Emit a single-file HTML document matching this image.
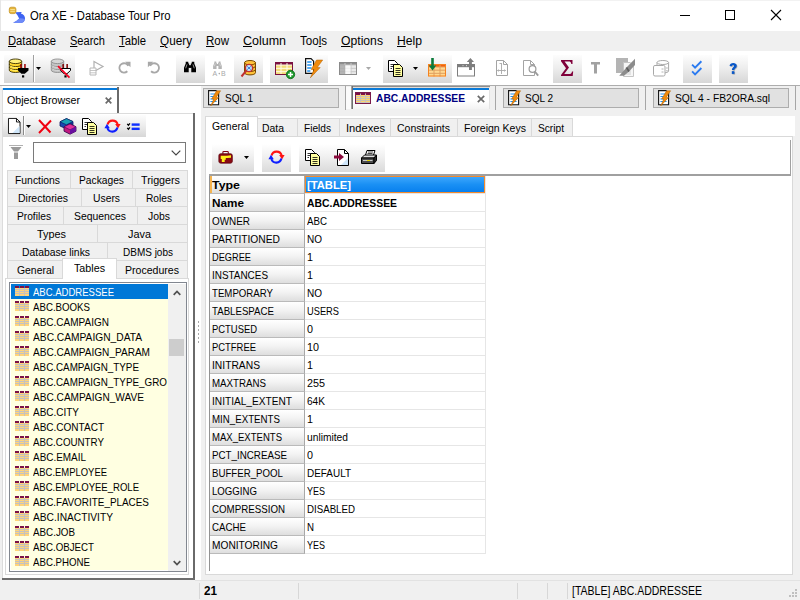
<!DOCTYPE html>
<html><head><meta charset="utf-8"><title>Ora XE - Database Tour Pro</title>
<style>
html,body{margin:0;padding:0;background:#f0f0f0;}
body{width:800px;height:600px;overflow:hidden;font-family:"Liberation Sans",sans-serif;font-size:11px;color:#000;}
#w{position:relative;width:800px;height:600px;overflow:hidden;background:#f0f0f0;}
#w div,#w svg{position:absolute;box-sizing:border-box;}
#w svg{overflow:visible;}
.t{position:absolute;white-space:nowrap;transform-origin:0 50%;display:block;}
u{text-decoration:underline;text-underline-offset:0.7px;text-decoration-thickness:1px;}
.tb{background:linear-gradient(#fdfdfd,#ececec 50%,#d7d7d7);}
.tab{background:#f0f0f0;border:1px solid #d9d9d9;}
.hdr{background:linear-gradient(#ffffff,#f4f4f4 45%,#dedede);border-right:1px solid #a8a8a8;border-bottom:1px solid #bababa;}
</style></head><body><div id="w">
<div style="left:0px;top:0px;width:800px;height:31px;background:#ffffff;"></div><div style="left:0px;top:0px;width:800px;height:1px;background:#f2f2f2;"></div><svg style="left:0px;top:0px" width="32" height="31" viewBox="0 0 32 31"><path d="M15 12.2 L21.8 11.9 L20.8 13.4 Q25.2 14.8 25 18.5 Q24.8 22 22 22.8 H13.1 Q16.5 21.2 19.2 18.4 Q17.8 15 15 12.2 Z" fill="#3d63f2"/><path d="M19.2 18.4 Q21.5 18 24.9 19 Q24.6 22 22 22.8 H13.1 Q16.5 21.2 19.2 18.4 Z" fill="#6d8af8"/><rect x="9.3" y="7.2" width="6.6" height="6.4" rx="1.8" fill="#e6b436" stroke="#c8982a" stroke-width="0.8"/><path d="M10.3 9.6 H14.9 M10.3 11.3 H14.9" stroke="#fbe9a0" stroke-width="0.9"/></svg><div style="left:0px;top:0px;width:1px;height:31px;background:#e6e6e6;"></div><span class="t" style="left:30.4px;top:8px;height:16px;line-height:16px;font-size:12px;transform:scaleX(0.9369);">Ora XE - Database Tour Pro</span><svg style="left:680px;top:15px" width="10" height="1"><rect width="10" height="1" fill="#000"/></svg><svg style="left:725px;top:10px" width="10" height="10"><rect x="0.5" y="0.5" width="9" height="9" fill="none" stroke="#000" stroke-width="1"/></svg><svg style="left:771px;top:10px" width="10" height="10"><path d="M0 0 L10 10 M10 0 L0 10" stroke="#000" stroke-width="1.1"/></svg><span class="t" style="left:8px;top:33px;height:16px;line-height:16px;font-size:12px;transform:scaleX(0.9343);"><u>D</u>atabase</span><span class="t" style="left:70px;top:33px;height:16px;line-height:16px;font-size:12px;transform:scaleX(0.9199);"><u>S</u>earch</span><span class="t" style="left:119px;top:33px;height:16px;line-height:16px;font-size:12px;transform:scaleX(0.9412);"><u>T</u>able</span><span class="t" style="left:160px;top:33px;height:16px;line-height:16px;font-size:12px;transform:scaleX(0.9790);"><u>Q</u>uery</span><span class="t" style="left:206px;top:33px;height:16px;line-height:16px;font-size:12px;transform:scaleX(0.9577);"><u>R</u>ow</span><span class="t" style="left:243px;top:33px;height:16px;line-height:16px;font-size:12px;transform:scaleX(1.0397);"><u>C</u>olumn</span><span class="t" style="left:300px;top:33px;height:16px;line-height:16px;font-size:12px;transform:scaleX(0.9632);">Too<u>l</u>s</span><span class="t" style="left:341px;top:33px;height:16px;line-height:16px;font-size:12px;transform:scaleX(1.0151);"><u>O</u>ptions</span><span class="t" style="left:397px;top:33px;height:16px;line-height:16px;font-size:12px;transform:scaleX(1.0127);"><u>H</u>elp</span><div style="left:0px;top:51px;width:800px;height:34px;background:#ffffff;"></div><div style="left:0px;top:85px;width:800px;height:1px;background:#adadad;"></div><div class="tb" style="left:4px;top:54.5px;width:71px;height:28px"></div><div class="tb" style="left:176px;top:54.5px;width:28.5px;height:28px"></div><div class="tb" style="left:234px;top:54.5px;width:28.5px;height:28px"></div><div class="tb" style="left:270px;top:54.5px;width:57.5px;height:28px"></div><div class="tb" style="left:383px;top:54.5px;width:69px;height:28px"></div><div class="tb" style="left:553px;top:54.5px;width:29px;height:28px"></div><div class="tb" style="left:683px;top:54.5px;width:29px;height:28px"></div><div class="tb" style="left:719px;top:54.5px;width:29px;height:28px"></div><div style="left:33px;top:55px;width:1px;height:27px;background:#a0a0a0;"></div><div style="left:34px;top:55px;width:1px;height:27px;background:#ffffff;"></div><svg style="left:0px;top:52px" width="80" height="32" viewBox="0 0 80 32"><path d="M9.3 9.3 V18.2 A6.2 2.3 0 0 0 21.700000000000003 18.2 V9.3 Z" fill="#ffd92e" stroke="#3a3000" stroke-width="0.9"/><path d="M9.3 12.3 A6.2 2.3 0 0 0 21.700000000000003 12.3" fill="none" stroke="#3a3000" stroke-width="0.9"/><path d="M10.100000000000001 13.5 A6.2 2.3 0 0 0 17.3 15.5" fill="none" stroke="#fff27a" stroke-width="0.9"/><path d="M9.3 15.3 A6.2 2.3 0 0 0 21.700000000000003 15.3" fill="none" stroke="#3a3000" stroke-width="0.9"/><path d="M10.100000000000001 16.5 A6.2 2.3 0 0 0 17.3 18.5" fill="none" stroke="#fff27a" stroke-width="0.9"/><ellipse cx="15.5" cy="9.3" rx="6.2" ry="2.3" fill="#fff27a" stroke="#3a3000" stroke-width="0.9"/><rect x="20.2" y="12" width="1.5" height="4.2" fill="#a00000"/><rect x="24.2" y="12" width="1.5" height="4.2" fill="#a00000"/><path d="M18 16 H28.5 V18.5 L24.8 21.7 H21.4 L18 18.5 Z" fill="#000"/><rect x="22" y="23.3" width="2.2" height="2.2" fill="#000"/><path d="M51.3 9.3 V18.2 A6.2 2.3 0 0 0 63.699999999999996 18.2 V9.3 Z" fill="#c4c4c4" stroke="#8e8e8e" stroke-width="0.9"/><path d="M51.3 12.3 A6.2 2.3 0 0 0 63.699999999999996 12.3" fill="none" stroke="#8e8e8e" stroke-width="0.9"/><path d="M52.099999999999994 13.5 A6.2 2.3 0 0 0 59.3 15.5" fill="none" stroke="#d6d6d6" stroke-width="0.9"/><path d="M51.3 15.3 A6.2 2.3 0 0 0 63.699999999999996 15.3" fill="none" stroke="#8e8e8e" stroke-width="0.9"/><path d="M52.099999999999994 16.5 A6.2 2.3 0 0 0 59.3 18.5" fill="none" stroke="#d6d6d6" stroke-width="0.9"/><ellipse cx="57.5" cy="9.3" rx="6.2" ry="2.3" fill="#d6d6d6" stroke="#8e8e8e" stroke-width="0.9"/><rect x="62.4" y="12" width="1.5" height="4.2" fill="#800000"/><rect x="66.4" y="12" width="1.5" height="4.2" fill="#800000"/><path d="M60.5 16.5 H70.5 V18.5 L67 21.7 H64 L60.5 18.5 Z" fill="#fff" stroke="#000" stroke-width="1"/><rect x="64.4" y="23.3" width="2.2" height="2.2" fill="#000"/><path d="M58 14.2 L69.5 25.6" stroke="#f40020" stroke-width="1.7"/></svg><svg style="left:36px;top:67px" width="5" height="3"><path d="M0 0 H5 L2.5 3 Z" fill="#000"/></svg><svg style="left:88px;top:60px" width="16" height="16" viewBox="0 0 16 16"><path d="M6 1.5 L15 6.5 L6 11.5 Z" fill="#fff" stroke="#b0b0b0" stroke-width="1.2"/><path d="M2 8 H8 V15 H2 Z" fill="#fff" stroke="#b8b8b8" stroke-width="1"/><path d="M2 10.5 H8 M2 12.8 H8" stroke="#b8b8b8" stroke-width="0.8"/></svg><svg style="left:117px;top:60px" width="14.4" height="14.4" viewBox="0 0 16 16"><path d="M12.5 6.5 A5.2 5.2 0 1 0 11.5 12.5" fill="none" stroke="#a8a8a8" stroke-width="2"/><path d="M9 2 H15 V8 Z" fill="#a8a8a8"/></svg><svg style="left:146.5px;top:60px" width="14.4" height="14.4" viewBox="0 0 16 16"><path d="M3.5 6.5 A5.2 5.2 0 1 1 4.5 12.5" fill="none" stroke="#a8a8a8" stroke-width="2"/><path d="M7 2 H1 V8 Z" fill="#a8a8a8"/></svg><svg style="left:183px;top:61px" width="14" height="12" viewBox="0 0 16 14"><path d="M3 1 H6 V3 H7 V5 H9 V3 H10 V1 H13 V3 L15 8 V13 H9.5 V8 H6.5 V13 H1 V8 L3 3 Z" fill="#000"/><rect x="7" y="5.5" width="2" height="2.5" fill="#000"/><path d="M4.5 4 L3 8.5 M11.5 4 L13 8.5" stroke="#fff" stroke-width="0.9" opacity="0.75"/></svg><svg style="left:211px;top:59px" width="18" height="19" viewBox="0 0 18 19"><g transform="translate(1.5,2) scale(0.62)"><path d="M3 1 H6 V3 H7 V5 H9 V3 H10 V1 H13 V3 L15 8 V13 H9.5 V8 H6.5 V13 H1 V8 L3 3 Z" fill="#b4b4b4"/><rect x="7" y="5.5" width="2" height="2.5" fill="#b4b4b4"/><path d="M4.5 4 L3 8.5 M11.5 4 L13 8.5" stroke="#fff" stroke-width="0.9" opacity="0.75"/></g><text x="1.5" y="17" font-family="Liberation Sans" font-size="7" fill="#a8a8a8">A</text><circle cx="8.3" cy="14.6" r="0.8" fill="#a8a8a8"/><text x="10" y="17" font-family="Liberation Sans" font-size="7" fill="#a8a8a8">B</text></svg><svg style="left:240px;top:59px" width="18" height="18" viewBox="0 0 18 18"><path d="M4.5 3.7 V13.7 A5.5 2.2 0 0 0 15.5 13.7 V3.7 Z" fill="#ffc23a" stroke="#7a4a00" stroke-width="1"/><path d="M4.5 7.033333333333333 A5.5 2.2 0 0 0 15.5 7.033333333333333" fill="none" stroke="#7a4a00" stroke-width="1"/><path d="M4.5 10.366666666666667 A5.5 2.2 0 0 0 15.5 10.366666666666667" fill="none" stroke="#7a4a00" stroke-width="1"/><ellipse cx="10" cy="3.7" rx="5.5" ry="2.2" fill="#ffc23a" stroke="#7a4a00" stroke-width="1"/><circle cx="9" cy="9" r="3.6" fill="#bfe6ff" stroke="#c03030" stroke-width="1.4"/><path d="M6.3 11.7 L1.5 17.5" stroke="#c03030" stroke-width="2"/><path d="M7.2 7.4 L10.8 10.6 M10.8 7.4 L7.2 10.6" stroke="#3070d0" stroke-width="0.9"/></svg><svg style="left:275px;top:61px" width="21" height="19" viewBox="0 0 21 19"><rect x="0" y="1" width="18" height="13" fill="#f3dc7a"/><rect x="0" y="1" width="18" height="3" fill="#7a1040"/><rect x="0" y="3.5" width="18" height="1" fill="#fffbe8"/><rect x="0" y="6.833333333333334" width="18" height="1" fill="#fffbe8"/><rect x="0" y="10.166666666666668" width="18" height="1" fill="#fffbe8"/><rect x="5.5" y="1" width="1" height="13" fill="#fffbe8"/><rect x="11.5" y="1" width="1" height="13" fill="#fffbe8"/><rect x="0.5" y="1.5" width="17" height="12" fill="none" stroke="#7a1040" stroke-width="1"/><circle cx="15.5" cy="13.5" r="4.2" fill="#1e9a2e" stroke="#0b6a18" stroke-width="0.8"/><path d="M13 13.5 H18 M15.5 11 V16" stroke="#fff" stroke-width="1.5"/></svg><svg style="left:305px;top:58px" width="18" height="20" viewBox="0 0 18 20"><path d="M0.6 0.6 H6 L8.6 3.2 V15.4 H0.6 Z" fill="#fff" stroke="#111" stroke-width="1.2"/><path d="M2.2 4 H6.6 M2.2 7 H6.6 M2.2 10 H6.6 M2.2 13 H5.4" stroke="#1e90f0" stroke-width="1.3"/><path d="M11.5 2 H17.7 L12.2 9.6 H15.2 L5.4 19.8 L9 11.6 H6.2 Z" fill="#f08a0c" stroke="#b06000" stroke-width="0.5"/></svg><svg style="left:339px;top:62px" width="18" height="13" viewBox="0 0 18 13"><rect x="0" y="0" width="18" height="13" fill="#e9e9e9"/><rect x="0" y="0" width="18" height="3" fill="#8e8e8e"/><rect x="0" y="2.5" width="18" height="1" fill="#c8c8c8"/><rect x="0" y="5.833333333333334" width="18" height="1" fill="#c8c8c8"/><rect x="0" y="9.166666666666668" width="18" height="1" fill="#c8c8c8"/><rect x="5.5" y="0" width="1" height="13" fill="#c8c8c8"/><rect x="11.5" y="0" width="1" height="13" fill="#c8c8c8"/><rect x="1" y="3" width="5" height="9" fill="#a8a8a8" opacity="0.8"/><rect x="6.5" y="3.5" width="5" height="9" fill="#fff" opacity="0.7"/><rect x="0.5" y="0.5" width="17" height="12" fill="none" stroke="#8a8a8a"/></svg><svg style="left:366px;top:67px" width="5" height="3"><path d="M0 0 H5 L2.5 3 Z" fill="#a8a8a8"/></svg><svg style="left:388px;top:59.5px" width="15" height="17" viewBox="0 0 15 17"><path d="M0.5 0.5 H6.5 L9.5 3.5 V11.5 H0.5 Z" fill="#fff" stroke="#000" stroke-width="1"/><path d="M2.5 4.5 H6 M2.5 6.5 H7 M2.5 8.5 H4" stroke="#000" stroke-width="0.8"/><path d="M5.5 4.5 H11.5 L14.5 7.5 V16.5 H5.5 Z" fill="#ffffa0" stroke="#000" stroke-width="1"/><path d="M7.5 8.5 H12.5 M7.5 10.5 H12.5 M7.5 12.5 H12.5 M7.5 14.5 H12.5" stroke="#000" stroke-width="0.8"/></svg><svg style="left:413px;top:67px" width="5" height="3"><path d="M0 0 H5 L2.5 3 Z" fill="#000"/></svg><svg style="left:427px;top:57px" width="20" height="21" viewBox="0 0 20 21"><rect x="1" y="7" width="18" height="12.5" fill="#ffd890"/><rect x="1" y="7" width="18" height="3" fill="#f4600c"/><rect x="1" y="9.5" width="18" height="1" fill="#e0a060"/><rect x="1" y="12.666666666666666" width="18" height="1" fill="#e0a060"/><rect x="1" y="15.833333333333332" width="18" height="1" fill="#e0a060"/><rect x="6.5" y="7" width="1" height="12.5" fill="#e0a060"/><rect x="12.5" y="7" width="1" height="12.5" fill="#e0a060"/><rect x="1.5" y="7.5" width="17" height="11.5" fill="none" stroke="#f58220"/><path d="M4.2 1 H6.8 V8.5 H9.2 L5.5 13.5 L1.8 8.5 H4.2 Z" fill="#0a7a3a"/></svg><svg style="left:457px;top:58px" width="19" height="20" viewBox="0 0 19 20"><rect x="0.5" y="6.5" width="17" height="11.5" fill="#fff" stroke="#7e7e7e" stroke-width="1"/><rect x="0" y="6" width="18" height="3.2" fill="#7e7e7e"/><rect x="5.5" y="7" width="1" height="1.2" fill="#d0d0d0"/><rect x="9" y="7" width="1" height="1.2" fill="#d0d0d0"/><path d="M12 12 V4 H9.8 L13.4 0 L17 4 H14.9 V12 Z" fill="#7e7e7e"/></svg><svg style="left:496px;top:59.5px" width="12" height="16" viewBox="0 0 12 16"><path d="M0.5 0.5 H7.5 L11.5 4.5 V15.5 H0.5 Z" fill="#fff" stroke="#a4a4a4"/><path d="M7.5 0.5 V4.5 H11.5" fill="none" stroke="#a4a4a4"/><path d="M5.5 3 V14 M3.5 3.5 H5.5 M1.5 10.5 H9.5 M2.5 9.5 L1.5 10.5 L2.5 11.5 M8.5 9.5 L9.5 10.5 L8.5 11.5" fill="none" stroke="#a8a8a8" stroke-width="0.9"/></svg><svg style="left:523px;top:59.5px" width="16" height="17" viewBox="0 0 16 17"><path d="M0.5 0.5 H7.5 L11.5 4.5 V15.5 H0.5 Z" fill="#fff" stroke="#a4a4a4"/><path d="M7.5 0.5 V4.5 H11.5" fill="none" stroke="#a4a4a4"/><circle cx="9.5" cy="9" r="3.4" fill="#fff" stroke="#9a9a9a" stroke-width="1.2"/><path d="M11.8 11.6 L15.2 15.6" stroke="#9a9a9a" stroke-width="1.8"/></svg><svg style="left:560px;top:59px" width="14" height="18" viewBox="0 0 14 18"><path d="M1 1 H12.5 V5 H11.3 C11 3.2 10.3 2.6 8.5 2.6 H4.6 L9 8.6 L4.2 15 H9 C10.8 15 11.6 14.2 12 12.4 H13.2 L12.7 17 H1 V16 L6 9.2 L1 2.2 Z" fill="#80003a"/></svg><svg style="left:591px;top:62.3px" width="9" height="11.6"><path d="M0 0 H9 V2.6 H6 V11.6 H3 V2.6 H0 Z" fill="#a2a2a2"/></svg><svg style="left:616px;top:58px" width="20" height="20" viewBox="0 0 20 20"><rect x="0" y="0" width="12" height="15" fill="#b4b4b4"/><path d="M7.5 4.5 H14 L17.5 7.5 V18.5 H7.5 Z" fill="#f6f6f6" stroke="#c4c4c4"/><path d="M9.5 10 H15 M9.5 12 H15 M9.5 14 H15 M9.5 16 H15" stroke="#c8c8c8" stroke-width="0.8"/><path d="M19 0.8 V7 L13 13.5 L8 17.8 L3.2 17.8 L10.5 9.5 Z" fill="#8c8c8c"/><path d="M10.5 9.5 L13 13.5" stroke="#5e5e5e" stroke-width="1.6"/></svg><svg style="left:652px;top:60px" width="18" height="17" viewBox="0 0 18 17"><g fill="#fff" stroke="#a8a8a8" stroke-width="1"><path d="M5 2.5 V11 A5.8 2 0 0 0 16.6 11 V2.5"/><ellipse cx="10.8" cy="2.5" rx="5.8" ry="2"/><path d="M1.5 6.8 Q1.5 5.5 3 5.5 H11.5 Q13 5.5 13 6.8 V14.6 Q13 16 11.5 16 H3 Q1.5 16 1.5 14.6 Z"/></g><path d="M9.5 9 H11.5 M9.5 12 H11.5 M14 8 H15.8 M14 10.8 H15.8" stroke="#b4b4b4"/></svg><svg style="left:691px;top:60px" width="11.5" height="16" viewBox="0 0 13 19"><path d="M1 5.5 L4.5 9 L12 1.5" fill="none" stroke="#2a7af0" stroke-width="2.2"/><path d="M1 13.5 L4.5 17 L12 9.5" fill="none" stroke="#2a7af0" stroke-width="2.2"/></svg><svg style="left:728px;top:62px" width="10.5" height="13" viewBox="0 0 12 17"><g transform="translate(0.9,0.9)" opacity="0.35"><path d="M1.2 5.2 C1.2 0.2 10.6 0.2 10.6 4.8 C10.6 8 7.4 8 7.4 10.6 H4.2 C4.2 7.4 7 7.2 7 5 C7 3.4 4.6 3.4 4.4 5.4 Z" fill="#404040"/><rect x="4.1" y="12" width="3.4" height="3.6" fill="#404040"/></g><path d="M1.2 5.2 C1.2 0.2 10.6 0.2 10.6 4.8 C10.6 8 7.4 8 7.4 10.6 H4.2 C4.2 7.4 7 7.2 7 5 C7 3.4 4.6 3.4 4.4 5.4 Z" fill="#0a58c8"/><rect x="4.1" y="12" width="3.4" height="3.6" fill="#0a58c8"/></svg><div style="left:2px;top:86px;width:199px;height:494px;background:#ffffff;"></div><div style="left:2px;top:88px;width:1px;height:492px;background:#dcdcdc;"></div><div style="left:3px;top:88px;width:114px;height:2px;background:#0a7ad8;"></div><div style="left:117px;top:87px;width:2px;height:26px;background:#6a6a6a;"></div><div style="left:3px;top:113px;width:190px;height:1px;background:#dcdcdc;"></div><div style="left:193px;top:113px;width:2px;height:467px;background:#6a6a6a;"></div><div style="left:2px;top:578px;width:193px;height:2px;background:#6d6d6d;"></div><span class="t" style="left:7px;top:93px;height:14px;line-height:14px;font-size:11px;transform:scaleX(0.9707);">Object Browser</span><svg style="left:105px;top:97px" width="7" height="7"><path d="M0.7 0.7 L6.3 6.3 M6.3 0.7 L0.7 6.3" stroke="#6a6a6a" stroke-width="1.7"/></svg><div class="tb" style="left:3px;top:115px;width:143px;height:22px"></div><div style="left:23px;top:116px;width:1px;height:19px;background:#8a8a8a;"></div><div style="left:24px;top:116px;width:1px;height:19px;background:#ffffff;"></div><svg style="left:8px;top:117.5px" width="12.5" height="16" viewBox="0 0 14 18"><path d="M0.5 0.5 H9.5 L13.5 4.5 V17.5 H0.5 Z" fill="#fff" stroke="#000"/><path d="M9.5 0.5 V4.5 H13.5" fill="none" stroke="#000"/><path d="M13 9 V17 H5 Z" fill="#cfe6fa"/></svg><svg style="left:26px;top:125px" width="5" height="3"><path d="M0 0 H5 L2.5 3 Z" fill="#000"/></svg><svg style="left:38px;top:119px" width="14" height="15"><path d="M1 1 L12.5 13.5 M13 1.5 L1 14" stroke="#f00010" stroke-width="2"/></svg><svg style="left:59px;top:118px" width="18" height="17" viewBox="0 0 18 17"><path d="M1 3.8 L7.5 0.6 L14 3.6 V8 L7.5 11 L1 8 Z" fill="#1848b0" stroke="#0c1460" stroke-width="0.8"/><path d="M1 3.8 L7.5 0.6 L14 3.6 L7.5 6.8 Z" fill="#18a0b4" stroke="#0c1460" stroke-width="0.6"/><path d="M7.5 6.8 L14 3.6 V8 L7.5 11 Z" fill="#103088"/><path d="M5 8.8 L11 6 L17 8.8 V13.2 L11 16.2 L5 13.2 Z" fill="#c01880" stroke="#30084a" stroke-width="0.8"/><path d="M5 8.8 L11 6 L17 8.8 L11 11.8 Z" fill="#e0309a" stroke="#30084a" stroke-width="0.5"/><path d="M11 11.8 L17 8.8 V13.2 L11 16.2 Z" fill="#6a10a0"/></svg><svg style="left:82px;top:118px" width="15" height="17" viewBox="0 0 15 17"><path d="M0.5 0.5 H6.5 L9.5 3.5 V11.5 H0.5 Z" fill="#fff" stroke="#000" stroke-width="1"/><path d="M2.5 4.5 H6 M2.5 6.5 H7 M2.5 8.5 H4" stroke="#000" stroke-width="0.8"/><path d="M5.5 4.5 H11.5 L14.5 7.5 V16.5 H5.5 Z" fill="#ffffa0" stroke="#000" stroke-width="1"/><path d="M7.5 8.5 H12.5 M7.5 10.5 H12.5 M7.5 12.5 H12.5 M7.5 14.5 H12.5" stroke="#000" stroke-width="0.8"/></svg><svg style="left:103.7px;top:119.2px" width="17" height="14" viewBox="0 0 17 14"><path d="M3.6 5.6 A5.2 5.2 0 0 1 13.6 5.2" fill="none" stroke="#ff1414" stroke-width="2.1"/><path d="M11.2 5 H16.6 L14 9.4 Z" fill="#ff1414"/><path d="M13.4 8.6 A5.2 5.2 0 0 1 3.4 9" fill="none" stroke="#1020ff" stroke-width="2.1"/><path d="M5.8 9.2 H0.4 L3 4.8 Z" fill="#1020ff"/></svg><svg style="left:126px;top:122.5px" width="14.5" height="8" viewBox="0 0 16 10"><path d="M0.5 1 L2 2.8 L3.8 0.5 M0.5 6 L2 7.8 L3.8 5.5" fill="none" stroke="#000" stroke-width="1.6"/><rect x="6" y="0.5" width="10" height="3" fill="#1030ff"/><rect x="6" y="5.8" width="10" height="3" fill="#1030ff"/></svg><svg style="left:9px;top:145px" width="14" height="14"><path d="M0 0.5 H14" stroke="#b0b0b0" stroke-width="1"/><path d="M1.5 2 H12.5 L9 6.5 H5 Z" fill="#9a9a9a"/><rect x="5" y="7.5" width="4" height="6.5" fill="#9a9a9a"/></svg><div style="left:33px;top:142px;width:153px;height:21px;background:#ffffff;border:1px solid #7a7a7a;"></div><svg style="left:171px;top:150px" width="10" height="6"><path d="M0.7 0.7 L5 5 L9.3 0.7" fill="none" stroke="#444" stroke-width="1.2"/></svg><div class="tab" style="left:7px;top:170px;width:64px;height:19px"></div><span class="t" style="left:14.5px;top:173px;height:14px;line-height:14px;font-size:11px;transform:scaleX(0.9433);">Functions</span><div class="tab" style="left:70px;top:170px;width:63px;height:19px"></div><span class="t" style="left:78.5px;top:173px;height:14px;line-height:14px;font-size:11px;transform:scaleX(0.9314);">Packages</span><div class="tab" style="left:132px;top:170px;width:56px;height:19px"></div><span class="t" style="left:141px;top:173px;height:14px;line-height:14px;font-size:11px;transform:scaleX(0.9765);">Triggers</span><div class="tab" style="left:7px;top:188px;width:75px;height:19px"></div><span class="t" style="left:17.5px;top:191px;height:14px;line-height:14px;font-size:11px;transform:scaleX(0.9510);">Directories</span><div class="tab" style="left:81px;top:188px;width:55px;height:19px"></div><span class="t" style="left:92.5px;top:191px;height:14px;line-height:14px;font-size:11px;transform:scaleX(0.9396);">Users</span><div class="tab" style="left:135px;top:188px;width:53px;height:19px"></div><span class="t" style="left:146px;top:191px;height:14px;line-height:14px;font-size:11px;transform:scaleX(0.9244);">Roles</span><div class="tab" style="left:7px;top:206px;width:57px;height:19px"></div><span class="t" style="left:16.5px;top:209px;height:14px;line-height:14px;font-size:11px;transform:scaleX(0.9267);">Profiles</span><div class="tab" style="left:63px;top:206px;width:75px;height:19px"></div><span class="t" style="left:73.5px;top:209px;height:14px;line-height:14px;font-size:11px;transform:scaleX(0.9446);">Sequences</span><div class="tab" style="left:137px;top:206px;width:51px;height:19px"></div><span class="t" style="left:148px;top:209px;height:14px;line-height:14px;font-size:11px;transform:scaleX(0.9462);">Jobs</span><div class="tab" style="left:7px;top:224px;width:91px;height:19px"></div><span class="t" style="left:37px;top:227px;height:14px;line-height:14px;font-size:11px;transform:scaleX(0.9878);">Types</span><div class="tab" style="left:97px;top:224px;width:91px;height:19px"></div><span class="t" style="left:128px;top:227px;height:14px;line-height:14px;font-size:11px;transform:scaleX(0.9892);">Java</span><div class="tab" style="left:7px;top:242px;width:101px;height:19px"></div><span class="t" style="left:21.5px;top:245px;height:14px;line-height:14px;font-size:11px;transform:scaleX(0.9424);">Database links</span><div class="tab" style="left:107px;top:242px;width:81px;height:19px"></div><span class="t" style="left:122.5px;top:245px;height:14px;line-height:14px;font-size:11px;transform:scaleX(0.9086);">DBMS jobs</span><div class="tab" style="left:7px;top:260px;width:56px;height:19px"></div><span class="t" style="left:16.5px;top:263px;height:14px;line-height:14px;font-size:11px;transform:scaleX(0.9453);">General</span><div class="tab" style="left:116px;top:260px;width:72px;height:19px"></div><span class="t" style="left:124.5px;top:263px;height:14px;line-height:14px;font-size:11px;transform:scaleX(0.9597);">Procedures</span><div style="left:5px;top:278px;width:184px;height:297px;background:#ffffff;border:1px solid #d9d9d9;"></div><div style="left:62px;top:258px;width:55px;height:21px;background:#ffffff;border:1px solid #d9d9d9;border-bottom:none;"></div><span class="t" style="left:74px;top:261px;height:14px;line-height:14px;font-size:11px;transform:scaleX(0.9749);">Tables</span><div style="left:9px;top:282px;width:178px;height:290px;background:#ffffe1;border:1px solid #828790;"></div><div style="left:10px;top:283px;width:176px;height:288px;border:1px solid #ffffff;"></div><div style="left:11px;top:284px;width:157px;height:15px;background:#0078d7;"></div><svg style="left:15px;top:286px" width="14" height="10" viewBox="0 0 14 10"><rect x="0" y="2" width="14" height="8" fill="#c4c2c0"/><rect x="0" y="0" width="4" height="2" fill="#7a1048"/><rect x="0" y="2" width="4" height="1" fill="#ffd47a"/><rect x="0" y="4" width="4" height="1" fill="#ffd47a"/><rect x="0" y="6" width="4" height="1" fill="#ffd47a"/><rect x="0" y="8" width="4" height="2" fill="#ffd47a"/><rect x="5" y="0" width="4" height="2" fill="#7a1048"/><rect x="5" y="2" width="4" height="1" fill="#ffd47a"/><rect x="5" y="4" width="4" height="1" fill="#ffd47a"/><rect x="5" y="6" width="4" height="1" fill="#ffd47a"/><rect x="5" y="8" width="4" height="2" fill="#ffd47a"/><rect x="10" y="0" width="4" height="2" fill="#7a1048"/><rect x="10" y="2" width="4" height="1" fill="#ffd47a"/><rect x="10" y="4" width="4" height="1" fill="#ffd47a"/><rect x="10" y="6" width="4" height="1" fill="#ffd47a"/><rect x="10" y="8" width="4" height="2" fill="#ffd47a"/></svg><span class="t" style="left:33px;top:285px;height:14px;line-height:14px;font-size:11px;color:#ffffff;transform:scaleX(0.8660);">ABC.ADDRESSEE</span><svg style="left:15px;top:301px" width="14" height="10" viewBox="0 0 14 10"><rect x="0" y="2" width="14" height="8" fill="#c4c2c0"/><rect x="0" y="0" width="4" height="2" fill="#7a1048"/><rect x="0" y="2" width="4" height="1" fill="#ffd47a"/><rect x="0" y="4" width="4" height="1" fill="#ffd47a"/><rect x="0" y="6" width="4" height="1" fill="#ffd47a"/><rect x="0" y="8" width="4" height="2" fill="#ffd47a"/><rect x="5" y="0" width="4" height="2" fill="#7a1048"/><rect x="5" y="2" width="4" height="1" fill="#ffd47a"/><rect x="5" y="4" width="4" height="1" fill="#ffd47a"/><rect x="5" y="6" width="4" height="1" fill="#ffd47a"/><rect x="5" y="8" width="4" height="2" fill="#ffd47a"/><rect x="10" y="0" width="4" height="2" fill="#7a1048"/><rect x="10" y="2" width="4" height="1" fill="#ffd47a"/><rect x="10" y="4" width="4" height="1" fill="#ffd47a"/><rect x="10" y="6" width="4" height="1" fill="#ffd47a"/><rect x="10" y="8" width="4" height="2" fill="#ffd47a"/></svg><span class="t" style="left:33px;top:300px;height:14px;line-height:14px;font-size:11px;transform:scaleX(0.8797);">ABC.BOOKS</span><svg style="left:15px;top:316px" width="14" height="10" viewBox="0 0 14 10"><rect x="0" y="2" width="14" height="8" fill="#c4c2c0"/><rect x="0" y="0" width="4" height="2" fill="#7a1048"/><rect x="0" y="2" width="4" height="1" fill="#ffd47a"/><rect x="0" y="4" width="4" height="1" fill="#ffd47a"/><rect x="0" y="6" width="4" height="1" fill="#ffd47a"/><rect x="0" y="8" width="4" height="2" fill="#ffd47a"/><rect x="5" y="0" width="4" height="2" fill="#7a1048"/><rect x="5" y="2" width="4" height="1" fill="#ffd47a"/><rect x="5" y="4" width="4" height="1" fill="#ffd47a"/><rect x="5" y="6" width="4" height="1" fill="#ffd47a"/><rect x="5" y="8" width="4" height="2" fill="#ffd47a"/><rect x="10" y="0" width="4" height="2" fill="#7a1048"/><rect x="10" y="2" width="4" height="1" fill="#ffd47a"/><rect x="10" y="4" width="4" height="1" fill="#ffd47a"/><rect x="10" y="6" width="4" height="1" fill="#ffd47a"/><rect x="10" y="8" width="4" height="2" fill="#ffd47a"/></svg><span class="t" style="left:33px;top:315px;height:14px;line-height:14px;font-size:11px;transform:scaleX(0.9098);">ABC.CAMPAIGN</span><svg style="left:15px;top:331px" width="14" height="10" viewBox="0 0 14 10"><rect x="0" y="2" width="14" height="8" fill="#c4c2c0"/><rect x="0" y="0" width="4" height="2" fill="#7a1048"/><rect x="0" y="2" width="4" height="1" fill="#ffd47a"/><rect x="0" y="4" width="4" height="1" fill="#ffd47a"/><rect x="0" y="6" width="4" height="1" fill="#ffd47a"/><rect x="0" y="8" width="4" height="2" fill="#ffd47a"/><rect x="5" y="0" width="4" height="2" fill="#7a1048"/><rect x="5" y="2" width="4" height="1" fill="#ffd47a"/><rect x="5" y="4" width="4" height="1" fill="#ffd47a"/><rect x="5" y="6" width="4" height="1" fill="#ffd47a"/><rect x="5" y="8" width="4" height="2" fill="#ffd47a"/><rect x="10" y="0" width="4" height="2" fill="#7a1048"/><rect x="10" y="2" width="4" height="1" fill="#ffd47a"/><rect x="10" y="4" width="4" height="1" fill="#ffd47a"/><rect x="10" y="6" width="4" height="1" fill="#ffd47a"/><rect x="10" y="8" width="4" height="2" fill="#ffd47a"/></svg><span class="t" style="left:33px;top:330px;height:14px;line-height:14px;font-size:11px;transform:scaleX(0.9288);">ABC.CAMPAIGN_DATA</span><svg style="left:15px;top:346px" width="14" height="10" viewBox="0 0 14 10"><rect x="0" y="2" width="14" height="8" fill="#c4c2c0"/><rect x="0" y="0" width="4" height="2" fill="#7a1048"/><rect x="0" y="2" width="4" height="1" fill="#ffd47a"/><rect x="0" y="4" width="4" height="1" fill="#ffd47a"/><rect x="0" y="6" width="4" height="1" fill="#ffd47a"/><rect x="0" y="8" width="4" height="2" fill="#ffd47a"/><rect x="5" y="0" width="4" height="2" fill="#7a1048"/><rect x="5" y="2" width="4" height="1" fill="#ffd47a"/><rect x="5" y="4" width="4" height="1" fill="#ffd47a"/><rect x="5" y="6" width="4" height="1" fill="#ffd47a"/><rect x="5" y="8" width="4" height="2" fill="#ffd47a"/><rect x="10" y="0" width="4" height="2" fill="#7a1048"/><rect x="10" y="2" width="4" height="1" fill="#ffd47a"/><rect x="10" y="4" width="4" height="1" fill="#ffd47a"/><rect x="10" y="6" width="4" height="1" fill="#ffd47a"/><rect x="10" y="8" width="4" height="2" fill="#ffd47a"/></svg><span class="t" style="left:33px;top:345px;height:14px;line-height:14px;font-size:11px;transform:scaleX(0.9144);">ABC.CAMPAIGN_PARAM</span><svg style="left:15px;top:361px" width="14" height="10" viewBox="0 0 14 10"><rect x="0" y="2" width="14" height="8" fill="#c4c2c0"/><rect x="0" y="0" width="4" height="2" fill="#7a1048"/><rect x="0" y="2" width="4" height="1" fill="#ffd47a"/><rect x="0" y="4" width="4" height="1" fill="#ffd47a"/><rect x="0" y="6" width="4" height="1" fill="#ffd47a"/><rect x="0" y="8" width="4" height="2" fill="#ffd47a"/><rect x="5" y="0" width="4" height="2" fill="#7a1048"/><rect x="5" y="2" width="4" height="1" fill="#ffd47a"/><rect x="5" y="4" width="4" height="1" fill="#ffd47a"/><rect x="5" y="6" width="4" height="1" fill="#ffd47a"/><rect x="5" y="8" width="4" height="2" fill="#ffd47a"/><rect x="10" y="0" width="4" height="2" fill="#7a1048"/><rect x="10" y="2" width="4" height="1" fill="#ffd47a"/><rect x="10" y="4" width="4" height="1" fill="#ffd47a"/><rect x="10" y="6" width="4" height="1" fill="#ffd47a"/><rect x="10" y="8" width="4" height="2" fill="#ffd47a"/></svg><span class="t" style="left:33px;top:360px;height:14px;line-height:14px;font-size:11px;transform:scaleX(0.8953);">ABC.CAMPAIGN_TYPE</span><svg style="left:15px;top:376px" width="14" height="10" viewBox="0 0 14 10"><rect x="0" y="2" width="14" height="8" fill="#c4c2c0"/><rect x="0" y="0" width="4" height="2" fill="#7a1048"/><rect x="0" y="2" width="4" height="1" fill="#ffd47a"/><rect x="0" y="4" width="4" height="1" fill="#ffd47a"/><rect x="0" y="6" width="4" height="1" fill="#ffd47a"/><rect x="0" y="8" width="4" height="2" fill="#ffd47a"/><rect x="5" y="0" width="4" height="2" fill="#7a1048"/><rect x="5" y="2" width="4" height="1" fill="#ffd47a"/><rect x="5" y="4" width="4" height="1" fill="#ffd47a"/><rect x="5" y="6" width="4" height="1" fill="#ffd47a"/><rect x="5" y="8" width="4" height="2" fill="#ffd47a"/><rect x="10" y="0" width="4" height="2" fill="#7a1048"/><rect x="10" y="2" width="4" height="1" fill="#ffd47a"/><rect x="10" y="4" width="4" height="1" fill="#ffd47a"/><rect x="10" y="6" width="4" height="1" fill="#ffd47a"/><rect x="10" y="8" width="4" height="2" fill="#ffd47a"/></svg><span class="t" style="left:33px;top:375px;height:14px;line-height:14px;font-size:11px;transform:scaleX(0.8959);">ABC.CAMPAIGN_TYPE_GRO</span><svg style="left:15px;top:391px" width="14" height="10" viewBox="0 0 14 10"><rect x="0" y="2" width="14" height="8" fill="#c4c2c0"/><rect x="0" y="0" width="4" height="2" fill="#7a1048"/><rect x="0" y="2" width="4" height="1" fill="#ffd47a"/><rect x="0" y="4" width="4" height="1" fill="#ffd47a"/><rect x="0" y="6" width="4" height="1" fill="#ffd47a"/><rect x="0" y="8" width="4" height="2" fill="#ffd47a"/><rect x="5" y="0" width="4" height="2" fill="#7a1048"/><rect x="5" y="2" width="4" height="1" fill="#ffd47a"/><rect x="5" y="4" width="4" height="1" fill="#ffd47a"/><rect x="5" y="6" width="4" height="1" fill="#ffd47a"/><rect x="5" y="8" width="4" height="2" fill="#ffd47a"/><rect x="10" y="0" width="4" height="2" fill="#7a1048"/><rect x="10" y="2" width="4" height="1" fill="#ffd47a"/><rect x="10" y="4" width="4" height="1" fill="#ffd47a"/><rect x="10" y="6" width="4" height="1" fill="#ffd47a"/><rect x="10" y="8" width="4" height="2" fill="#ffd47a"/></svg><span class="t" style="left:33px;top:390px;height:14px;line-height:14px;font-size:11px;transform:scaleX(0.9187);">ABC.CAMPAIGN_WAVE</span><svg style="left:15px;top:406px" width="14" height="10" viewBox="0 0 14 10"><rect x="0" y="2" width="14" height="8" fill="#c4c2c0"/><rect x="0" y="0" width="4" height="2" fill="#7a1048"/><rect x="0" y="2" width="4" height="1" fill="#ffd47a"/><rect x="0" y="4" width="4" height="1" fill="#ffd47a"/><rect x="0" y="6" width="4" height="1" fill="#ffd47a"/><rect x="0" y="8" width="4" height="2" fill="#ffd47a"/><rect x="5" y="0" width="4" height="2" fill="#7a1048"/><rect x="5" y="2" width="4" height="1" fill="#ffd47a"/><rect x="5" y="4" width="4" height="1" fill="#ffd47a"/><rect x="5" y="6" width="4" height="1" fill="#ffd47a"/><rect x="5" y="8" width="4" height="2" fill="#ffd47a"/><rect x="10" y="0" width="4" height="2" fill="#7a1048"/><rect x="10" y="2" width="4" height="1" fill="#ffd47a"/><rect x="10" y="4" width="4" height="1" fill="#ffd47a"/><rect x="10" y="6" width="4" height="1" fill="#ffd47a"/><rect x="10" y="8" width="4" height="2" fill="#ffd47a"/></svg><span class="t" style="left:33px;top:405px;height:14px;line-height:14px;font-size:11px;transform:scaleX(0.9067);">ABC.CITY</span><svg style="left:15px;top:421px" width="14" height="10" viewBox="0 0 14 10"><rect x="0" y="2" width="14" height="8" fill="#c4c2c0"/><rect x="0" y="0" width="4" height="2" fill="#7a1048"/><rect x="0" y="2" width="4" height="1" fill="#ffd47a"/><rect x="0" y="4" width="4" height="1" fill="#ffd47a"/><rect x="0" y="6" width="4" height="1" fill="#ffd47a"/><rect x="0" y="8" width="4" height="2" fill="#ffd47a"/><rect x="5" y="0" width="4" height="2" fill="#7a1048"/><rect x="5" y="2" width="4" height="1" fill="#ffd47a"/><rect x="5" y="4" width="4" height="1" fill="#ffd47a"/><rect x="5" y="6" width="4" height="1" fill="#ffd47a"/><rect x="5" y="8" width="4" height="2" fill="#ffd47a"/><rect x="10" y="0" width="4" height="2" fill="#7a1048"/><rect x="10" y="2" width="4" height="1" fill="#ffd47a"/><rect x="10" y="4" width="4" height="1" fill="#ffd47a"/><rect x="10" y="6" width="4" height="1" fill="#ffd47a"/><rect x="10" y="8" width="4" height="2" fill="#ffd47a"/></svg><span class="t" style="left:33px;top:420px;height:14px;line-height:14px;font-size:11px;transform:scaleX(0.9099);">ABC.CONTACT</span><svg style="left:15px;top:436px" width="14" height="10" viewBox="0 0 14 10"><rect x="0" y="2" width="14" height="8" fill="#c4c2c0"/><rect x="0" y="0" width="4" height="2" fill="#7a1048"/><rect x="0" y="2" width="4" height="1" fill="#ffd47a"/><rect x="0" y="4" width="4" height="1" fill="#ffd47a"/><rect x="0" y="6" width="4" height="1" fill="#ffd47a"/><rect x="0" y="8" width="4" height="2" fill="#ffd47a"/><rect x="5" y="0" width="4" height="2" fill="#7a1048"/><rect x="5" y="2" width="4" height="1" fill="#ffd47a"/><rect x="5" y="4" width="4" height="1" fill="#ffd47a"/><rect x="5" y="6" width="4" height="1" fill="#ffd47a"/><rect x="5" y="8" width="4" height="2" fill="#ffd47a"/><rect x="10" y="0" width="4" height="2" fill="#7a1048"/><rect x="10" y="2" width="4" height="1" fill="#ffd47a"/><rect x="10" y="4" width="4" height="1" fill="#ffd47a"/><rect x="10" y="6" width="4" height="1" fill="#ffd47a"/><rect x="10" y="8" width="4" height="2" fill="#ffd47a"/></svg><span class="t" style="left:33px;top:435px;height:14px;line-height:14px;font-size:11px;transform:scaleX(0.8889);">ABC.COUNTRY</span><svg style="left:15px;top:451px" width="14" height="10" viewBox="0 0 14 10"><rect x="0" y="2" width="14" height="8" fill="#c4c2c0"/><rect x="0" y="0" width="4" height="2" fill="#7a1048"/><rect x="0" y="2" width="4" height="1" fill="#ffd47a"/><rect x="0" y="4" width="4" height="1" fill="#ffd47a"/><rect x="0" y="6" width="4" height="1" fill="#ffd47a"/><rect x="0" y="8" width="4" height="2" fill="#ffd47a"/><rect x="5" y="0" width="4" height="2" fill="#7a1048"/><rect x="5" y="2" width="4" height="1" fill="#ffd47a"/><rect x="5" y="4" width="4" height="1" fill="#ffd47a"/><rect x="5" y="6" width="4" height="1" fill="#ffd47a"/><rect x="5" y="8" width="4" height="2" fill="#ffd47a"/><rect x="10" y="0" width="4" height="2" fill="#7a1048"/><rect x="10" y="2" width="4" height="1" fill="#ffd47a"/><rect x="10" y="4" width="4" height="1" fill="#ffd47a"/><rect x="10" y="6" width="4" height="1" fill="#ffd47a"/><rect x="10" y="8" width="4" height="2" fill="#ffd47a"/></svg><span class="t" style="left:33px;top:450px;height:14px;line-height:14px;font-size:11px;transform:scaleX(0.9031);">ABC.EMAIL</span><svg style="left:15px;top:466px" width="14" height="10" viewBox="0 0 14 10"><rect x="0" y="2" width="14" height="8" fill="#c4c2c0"/><rect x="0" y="0" width="4" height="2" fill="#7a1048"/><rect x="0" y="2" width="4" height="1" fill="#ffd47a"/><rect x="0" y="4" width="4" height="1" fill="#ffd47a"/><rect x="0" y="6" width="4" height="1" fill="#ffd47a"/><rect x="0" y="8" width="4" height="2" fill="#ffd47a"/><rect x="5" y="0" width="4" height="2" fill="#7a1048"/><rect x="5" y="2" width="4" height="1" fill="#ffd47a"/><rect x="5" y="4" width="4" height="1" fill="#ffd47a"/><rect x="5" y="6" width="4" height="1" fill="#ffd47a"/><rect x="5" y="8" width="4" height="2" fill="#ffd47a"/><rect x="10" y="0" width="4" height="2" fill="#7a1048"/><rect x="10" y="2" width="4" height="1" fill="#ffd47a"/><rect x="10" y="4" width="4" height="1" fill="#ffd47a"/><rect x="10" y="6" width="4" height="1" fill="#ffd47a"/><rect x="10" y="8" width="4" height="2" fill="#ffd47a"/></svg><span class="t" style="left:33px;top:465px;height:14px;line-height:14px;font-size:11px;transform:scaleX(0.8584);">ABC.EMPLOYEE</span><svg style="left:15px;top:481px" width="14" height="10" viewBox="0 0 14 10"><rect x="0" y="2" width="14" height="8" fill="#c4c2c0"/><rect x="0" y="0" width="4" height="2" fill="#7a1048"/><rect x="0" y="2" width="4" height="1" fill="#ffd47a"/><rect x="0" y="4" width="4" height="1" fill="#ffd47a"/><rect x="0" y="6" width="4" height="1" fill="#ffd47a"/><rect x="0" y="8" width="4" height="2" fill="#ffd47a"/><rect x="5" y="0" width="4" height="2" fill="#7a1048"/><rect x="5" y="2" width="4" height="1" fill="#ffd47a"/><rect x="5" y="4" width="4" height="1" fill="#ffd47a"/><rect x="5" y="6" width="4" height="1" fill="#ffd47a"/><rect x="5" y="8" width="4" height="2" fill="#ffd47a"/><rect x="10" y="0" width="4" height="2" fill="#7a1048"/><rect x="10" y="2" width="4" height="1" fill="#ffd47a"/><rect x="10" y="4" width="4" height="1" fill="#ffd47a"/><rect x="10" y="6" width="4" height="1" fill="#ffd47a"/><rect x="10" y="8" width="4" height="2" fill="#ffd47a"/></svg><span class="t" style="left:33px;top:480px;height:14px;line-height:14px;font-size:11px;transform:scaleX(0.8669);">ABC.EMPLOYEE_ROLE</span><svg style="left:15px;top:496px" width="14" height="10" viewBox="0 0 14 10"><rect x="0" y="2" width="14" height="8" fill="#c4c2c0"/><rect x="0" y="0" width="4" height="2" fill="#7a1048"/><rect x="0" y="2" width="4" height="1" fill="#ffd47a"/><rect x="0" y="4" width="4" height="1" fill="#ffd47a"/><rect x="0" y="6" width="4" height="1" fill="#ffd47a"/><rect x="0" y="8" width="4" height="2" fill="#ffd47a"/><rect x="5" y="0" width="4" height="2" fill="#7a1048"/><rect x="5" y="2" width="4" height="1" fill="#ffd47a"/><rect x="5" y="4" width="4" height="1" fill="#ffd47a"/><rect x="5" y="6" width="4" height="1" fill="#ffd47a"/><rect x="5" y="8" width="4" height="2" fill="#ffd47a"/><rect x="10" y="0" width="4" height="2" fill="#7a1048"/><rect x="10" y="2" width="4" height="1" fill="#ffd47a"/><rect x="10" y="4" width="4" height="1" fill="#ffd47a"/><rect x="10" y="6" width="4" height="1" fill="#ffd47a"/><rect x="10" y="8" width="4" height="2" fill="#ffd47a"/></svg><span class="t" style="left:33px;top:495px;height:14px;line-height:14px;font-size:11px;transform:scaleX(0.9006);">ABC.FAVORITE_PLACES</span><svg style="left:15px;top:511px" width="14" height="10" viewBox="0 0 14 10"><rect x="0" y="2" width="14" height="8" fill="#c4c2c0"/><rect x="0" y="0" width="4" height="2" fill="#7a1048"/><rect x="0" y="2" width="4" height="1" fill="#ffd47a"/><rect x="0" y="4" width="4" height="1" fill="#ffd47a"/><rect x="0" y="6" width="4" height="1" fill="#ffd47a"/><rect x="0" y="8" width="4" height="2" fill="#ffd47a"/><rect x="5" y="0" width="4" height="2" fill="#7a1048"/><rect x="5" y="2" width="4" height="1" fill="#ffd47a"/><rect x="5" y="4" width="4" height="1" fill="#ffd47a"/><rect x="5" y="6" width="4" height="1" fill="#ffd47a"/><rect x="5" y="8" width="4" height="2" fill="#ffd47a"/><rect x="10" y="0" width="4" height="2" fill="#7a1048"/><rect x="10" y="2" width="4" height="1" fill="#ffd47a"/><rect x="10" y="4" width="4" height="1" fill="#ffd47a"/><rect x="10" y="6" width="4" height="1" fill="#ffd47a"/><rect x="10" y="8" width="4" height="2" fill="#ffd47a"/></svg><span class="t" style="left:33px;top:510px;height:14px;line-height:14px;font-size:11px;transform:scaleX(0.9282);">ABC.INACTIVITY</span><svg style="left:15px;top:526px" width="14" height="10" viewBox="0 0 14 10"><rect x="0" y="2" width="14" height="8" fill="#c4c2c0"/><rect x="0" y="0" width="4" height="2" fill="#7a1048"/><rect x="0" y="2" width="4" height="1" fill="#ffd47a"/><rect x="0" y="4" width="4" height="1" fill="#ffd47a"/><rect x="0" y="6" width="4" height="1" fill="#ffd47a"/><rect x="0" y="8" width="4" height="2" fill="#ffd47a"/><rect x="5" y="0" width="4" height="2" fill="#7a1048"/><rect x="5" y="2" width="4" height="1" fill="#ffd47a"/><rect x="5" y="4" width="4" height="1" fill="#ffd47a"/><rect x="5" y="6" width="4" height="1" fill="#ffd47a"/><rect x="5" y="8" width="4" height="2" fill="#ffd47a"/><rect x="10" y="0" width="4" height="2" fill="#7a1048"/><rect x="10" y="2" width="4" height="1" fill="#ffd47a"/><rect x="10" y="4" width="4" height="1" fill="#ffd47a"/><rect x="10" y="6" width="4" height="1" fill="#ffd47a"/><rect x="10" y="8" width="4" height="2" fill="#ffd47a"/></svg><span class="t" style="left:33px;top:525px;height:14px;line-height:14px;font-size:11px;transform:scaleX(0.8921);">ABC.JOB</span><svg style="left:15px;top:541px" width="14" height="10" viewBox="0 0 14 10"><rect x="0" y="2" width="14" height="8" fill="#c4c2c0"/><rect x="0" y="0" width="4" height="2" fill="#7a1048"/><rect x="0" y="2" width="4" height="1" fill="#ffd47a"/><rect x="0" y="4" width="4" height="1" fill="#ffd47a"/><rect x="0" y="6" width="4" height="1" fill="#ffd47a"/><rect x="0" y="8" width="4" height="2" fill="#ffd47a"/><rect x="5" y="0" width="4" height="2" fill="#7a1048"/><rect x="5" y="2" width="4" height="1" fill="#ffd47a"/><rect x="5" y="4" width="4" height="1" fill="#ffd47a"/><rect x="5" y="6" width="4" height="1" fill="#ffd47a"/><rect x="5" y="8" width="4" height="2" fill="#ffd47a"/><rect x="10" y="0" width="4" height="2" fill="#7a1048"/><rect x="10" y="2" width="4" height="1" fill="#ffd47a"/><rect x="10" y="4" width="4" height="1" fill="#ffd47a"/><rect x="10" y="6" width="4" height="1" fill="#ffd47a"/><rect x="10" y="8" width="4" height="2" fill="#ffd47a"/></svg><span class="t" style="left:33px;top:540px;height:14px;line-height:14px;font-size:11px;transform:scaleX(0.8831);">ABC.OBJECT</span><svg style="left:15px;top:556px" width="14" height="10" viewBox="0 0 14 10"><rect x="0" y="2" width="14" height="8" fill="#c4c2c0"/><rect x="0" y="0" width="4" height="2" fill="#7a1048"/><rect x="0" y="2" width="4" height="1" fill="#ffd47a"/><rect x="0" y="4" width="4" height="1" fill="#ffd47a"/><rect x="0" y="6" width="4" height="1" fill="#ffd47a"/><rect x="0" y="8" width="4" height="2" fill="#ffd47a"/><rect x="5" y="0" width="4" height="2" fill="#7a1048"/><rect x="5" y="2" width="4" height="1" fill="#ffd47a"/><rect x="5" y="4" width="4" height="1" fill="#ffd47a"/><rect x="5" y="6" width="4" height="1" fill="#ffd47a"/><rect x="5" y="8" width="4" height="2" fill="#ffd47a"/><rect x="10" y="0" width="4" height="2" fill="#7a1048"/><rect x="10" y="2" width="4" height="1" fill="#ffd47a"/><rect x="10" y="4" width="4" height="1" fill="#ffd47a"/><rect x="10" y="6" width="4" height="1" fill="#ffd47a"/><rect x="10" y="8" width="4" height="2" fill="#ffd47a"/></svg><span class="t" style="left:33px;top:555px;height:14px;line-height:14px;font-size:11px;transform:scaleX(0.8797);">ABC.PHONE</span><div style="left:168px;top:284px;width:18px;height:287px;background:#f0f0f0;"></div><div style="left:169px;top:339px;width:15px;height:17px;background:#cdcdcd;"></div><svg style="left:172.6px;top:290px" width="8" height="6"><path d="M0.7 4.9 L4 1.5 L7.3 4.9" fill="none" stroke="#505050" stroke-width="1.7"/></svg><svg style="left:172.6px;top:559.5px" width="8" height="6"><path d="M0.7 1.1 L4 4.5 L7.3 1.1" fill="none" stroke="#505050" stroke-width="1.7"/></svg><div style="left:197.5px;top:321px;width:1.5px;height:1.5px;background:#a8a8a8;"></div><div style="left:197.5px;top:325px;width:1.5px;height:1.5px;background:#a8a8a8;"></div><div style="left:197.5px;top:329px;width:1.5px;height:1.5px;background:#a8a8a8;"></div><div style="left:197.5px;top:333px;width:1.5px;height:1.5px;background:#a8a8a8;"></div><div style="left:197.5px;top:337px;width:1.5px;height:1.5px;background:#a8a8a8;"></div><div style="left:197.5px;top:341px;width:1.5px;height:1.5px;background:#a8a8a8;"></div><div style="left:203px;top:88px;width:136px;height:20px;background:#e1e1e1;border:1px solid #adadad;"></div><svg style="left:207.5px;top:90px" width="13" height="16" viewBox="0 0 13 16"><path d="M0.6 0.6 H8 L10.6 3.2 V14.8 H0.6 Z" fill="#fff" stroke="#111" stroke-width="1.1"/><path d="M2.4 4 H8.6 M2.4 6.5 H8.6 M2.4 9 H8.6 M2.4 11.5 H8.6" stroke="#1e90f0" stroke-width="1.2"/><path d="M8.6 0.8 H12.6 L8.2 7.4 H10.6 L2.6 16 L5.8 9 H3.6 Z" fill="#f08a0c" stroke="#b06000" stroke-width="0.5"/></svg><span class="t" style="left:225px;top:91px;height:14px;line-height:14px;font-size:11px;transform:scaleX(0.9096);">SQL 1</span><div style="left:503px;top:88px;width:136px;height:20px;background:#e1e1e1;border:1px solid #adadad;"></div><svg style="left:507.5px;top:90px" width="13" height="16" viewBox="0 0 13 16"><path d="M0.6 0.6 H8 L10.6 3.2 V14.8 H0.6 Z" fill="#fff" stroke="#111" stroke-width="1.1"/><path d="M2.4 4 H8.6 M2.4 6.5 H8.6 M2.4 9 H8.6 M2.4 11.5 H8.6" stroke="#1e90f0" stroke-width="1.2"/><path d="M8.6 0.8 H12.6 L8.2 7.4 H10.6 L2.6 16 L5.8 9 H3.6 Z" fill="#f08a0c" stroke="#b06000" stroke-width="0.5"/></svg><span class="t" style="left:525px;top:91px;height:14px;line-height:14px;font-size:11px;transform:scaleX(0.9096);">SQL 2</span><div style="left:653px;top:88px;width:136px;height:20px;background:#e1e1e1;border:1px solid #adadad;"></div><svg style="left:657.5px;top:90px" width="13" height="16" viewBox="0 0 13 16"><path d="M0.6 0.6 H8 L10.6 3.2 V14.8 H0.6 Z" fill="#fff" stroke="#111" stroke-width="1.1"/><path d="M2.4 4 H8.6 M2.4 6.5 H8.6 M2.4 9 H8.6 M2.4 11.5 H8.6" stroke="#1e90f0" stroke-width="1.2"/><path d="M8.6 0.8 H12.6 L8.2 7.4 H10.6 L2.6 16 L5.8 9 H3.6 Z" fill="#f08a0c" stroke="#b06000" stroke-width="0.5"/></svg><span class="t" style="left:675px;top:91px;height:14px;line-height:14px;font-size:11px;transform:scaleX(0.9342);">SQL 4 - FB2ORA.sql</span><div style="left:345px;top:86px;width:1px;height:24px;background:#a6a6a6;"></div><div style="left:495px;top:86px;width:1px;height:24px;background:#a6a6a6;"></div><div style="left:645px;top:86px;width:1px;height:24px;background:#a6a6a6;"></div><div style="left:795px;top:86px;width:1px;height:24px;background:#a6a6a6;"></div><div style="left:346px;top:87px;width:5px;height:22px;background:#fbfbfb;"></div><div style="left:351px;top:86px;width:139px;height:1px;background:#8e8e8e;"></div><div style="left:353px;top:87px;width:137px;height:1px;background:#e2dcd6;"></div><div style="left:351px;top:86px;width:1px;height:23px;background:#a0a0a0;"></div><div style="left:352px;top:86px;width:1px;height:23px;background:#707070;"></div><div style="left:353px;top:88px;width:136px;height:21px;background:linear-gradient(#ffffff,#ffffff 60%,#f3f3f3);"></div><div style="left:353px;top:88px;width:136px;height:2px;background:#0a7ad8;"></div><div style="left:489px;top:90px;width:1px;height:19px;background:#e3e3e3;"></div><svg style="left:355px;top:92px" width="16" height="12" viewBox="0 0 16 12"><rect x="0.5" y="0.5" width="15" height="11" fill="#c6c2bc" stroke="#7a1a4a"/><rect x="1" y="1" width="14" height="2" fill="#7a1048"/><rect x="1" y="3" width="4" height="1" fill="#ffd46a"/><rect x="6" y="3" width="4" height="1" fill="#ffd46a"/><rect x="11" y="3" width="4" height="1" fill="#ffd46a"/><rect x="1" y="5" width="4" height="1" fill="#ffd46a"/><rect x="6" y="5" width="4" height="1" fill="#ffd46a"/><rect x="11" y="5" width="4" height="1" fill="#ffd46a"/><rect x="1" y="7" width="4" height="1" fill="#ffd46a"/><rect x="6" y="7" width="4" height="1" fill="#ffd46a"/><rect x="11" y="7" width="4" height="1" fill="#ffd46a"/><rect x="1" y="9" width="4" height="1" fill="#ffd46a"/><rect x="6" y="9" width="4" height="1" fill="#ffd46a"/><rect x="11" y="9" width="4" height="1" fill="#ffd46a"/><rect x="5" y="1.5" width="1" height="2" fill="#c6c2bc"/><rect x="10" y="1.5" width="1" height="2" fill="#c6c2bc"/></svg><span class="t" style="left:376px;top:91px;height:14px;line-height:14px;font-size:11px;font-weight:bold;color:#000080;transform:scaleX(0.9333);">ABC.ADDRESSEE</span><svg style="left:477px;top:95px" width="8" height="8"><path d="M0.8 0.8 L7.2 7.2 M7.2 0.8 L0.8 7.2" stroke="#6a6a6a" stroke-width="1.7"/></svg><div style="left:205px;top:116px;width:590px;height:20px;background:#ffffff;"></div><div style="left:205px;top:136px;width:588px;height:439px;background:#ffffff;border:1px solid #d9d9d9;"></div><div class="tab" style="left:257px;top:118px;width:41px;height:19px"></div><span class="t" style="left:262px;top:121px;height:14px;line-height:14px;font-size:11px;transform:scaleX(0.9462);">Data</span><div class="tab" style="left:297px;top:118px;width:43px;height:19px"></div><span class="t" style="left:304px;top:121px;height:14px;line-height:14px;font-size:11px;transform:scaleX(0.9201);">Fields</span><div class="tab" style="left:339px;top:118px;width:52px;height:19px"></div><span class="t" style="left:346px;top:121px;height:14px;line-height:14px;font-size:11px;transform:scaleX(1.0122);">Indexes</span><div class="tab" style="left:390px;top:118px;width:68px;height:19px"></div><span class="t" style="left:397px;top:121px;height:14px;line-height:14px;font-size:11px;transform:scaleX(0.9525);">Constraints</span><div class="tab" style="left:457px;top:118px;width:75px;height:19px"></div><span class="t" style="left:464px;top:121px;height:14px;line-height:14px;font-size:11px;transform:scaleX(0.9566);">Foreign Keys</span><div class="tab" style="left:531px;top:118px;width:42px;height:19px"></div><span class="t" style="left:538px;top:121px;height:14px;line-height:14px;font-size:11px;transform:scaleX(0.9244);">Script</span><div style="left:205px;top:116px;width:53px;height:21px;background:#ffffff;border:1px solid #d9d9d9;border-bottom:none;"></div><span class="t" style="left:212px;top:119px;height:14px;line-height:14px;font-size:11px;transform:scaleX(0.9453);">General</span><div style="left:209px;top:140px;width:582px;height:36px;background:#ffffff;border-right:1px solid #a0a0a0;border-bottom:2px solid #a0a0a0;"></div><div style="left:212px;top:144px;width:42px;height:28px;background:linear-gradient(#ffffff,#f2f2f2 40%,#dadada)"></div><div style="left:262px;top:144px;width:29px;height:28px;background:linear-gradient(#ffffff,#f2f2f2 40%,#dadada)"></div><div style="left:299px;top:144px;width:86px;height:28px;background:linear-gradient(#ffffff,#f2f2f2 40%,#dadada)"></div><svg style="left:218px;top:150.8px" width="15.2" height="12.6" viewBox="0 0 16 14"><path d="M5 3 V1.5 Q5 0.5 6 0.5 H10 Q11 0.5 11 1.5 V3" fill="none" stroke="#800010" stroke-width="1.2"/><rect x="0.5" y="3" width="15" height="10.5" rx="2" fill="#8a0a14" stroke="#5a0008" stroke-width="0.8"/><path d="M2.6 5.4 H9.6 L14 4.6 V7.6 L9.6 7.8 H8.2 V9.6 H7 V12.2 H3.8 V8.8 H2.6 Z" fill="#fff01a"/></svg><svg style="left:244px;top:156px" width="5" height="3"><path d="M0 0 H5 L2.5 3 Z" fill="#000"/></svg><svg style="left:267.8px;top:150px" width="17" height="14" viewBox="0 0 17 14"><path d="M3.6 5.6 A5.2 5.2 0 0 1 13.6 5.2" fill="none" stroke="#ff1414" stroke-width="2.1"/><path d="M11.2 5 H16.6 L14 9.4 Z" fill="#ff1414"/><path d="M13.4 8.6 A5.2 5.2 0 0 1 3.4 9" fill="none" stroke="#1020ff" stroke-width="2.1"/><path d="M5.8 9.2 H0.4 L3 4.8 Z" fill="#1020ff"/></svg><svg style="left:305px;top:149px" width="15" height="17" viewBox="0 0 15 17"><path d="M0.5 0.5 H6.5 L9.5 3.5 V11.5 H0.5 Z" fill="#fff" stroke="#000" stroke-width="1"/><path d="M2.5 4.5 H6 M2.5 6.5 H7 M2.5 8.5 H4" stroke="#000" stroke-width="0.8"/><path d="M5.5 4.5 H11.5 L14.5 7.5 V16.5 H5.5 Z" fill="#ffffa0" stroke="#000" stroke-width="1"/><path d="M7.5 8.5 H12.5 M7.5 10.5 H12.5 M7.5 12.5 H12.5 M7.5 14.5 H12.5" stroke="#000" stroke-width="0.8"/></svg><svg style="left:334px;top:149px" width="15" height="17" viewBox="0 0 15 17"><path d="M3.5 0.5 H10.5 L14.5 4.5 V16.5 H3.5 Z" fill="#fff" stroke="#000"/><path d="M10.5 0.5 V4.5 H14.5" fill="none" stroke="#000"/><path d="M14 9 V16 H7 Z" fill="#cfe6fa"/><path d="M0 6.5 H5 V4 L10 8 L5 12 V9.5 H0 Z" fill="#8a0a3c"/></svg><svg style="left:361px;top:150px" width="17" height="15" viewBox="0 0 17 15"><path d="M4.5 5 L6 0.5 H14 L12.5 5" fill="#fff" stroke="#000"/><path d="M7 2 H12 M6.5 3.5 H11.5" stroke="#000" stroke-width="0.7"/><path d="M0.5 8 L3.5 5 H15.5 L13 8 Z" fill="#e0e0e0" stroke="#000"/><path d="M0.5 8 H13 V13.5 H0.5 Z" fill="#4a4a4a" stroke="#000"/><path d="M13 8 L15.5 5 V10.5 L13 13.5 Z" fill="#2a2a2a" stroke="#000"/><path d="M2 10.5 H11.5" stroke="#c8c8c8"/><rect x="6" y="10" width="3" height="1" fill="#e8d800"/></svg><div style="left:209px;top:176px;width:1px;height:395px;background:#929292;"></div><div style="left:485px;top:176px;width:1px;height:378px;background:#e6e6e6;"></div><div class="hdr" style="left:210px;top:176px;width:95px;height:18px"></div><div style="left:305px;top:193px;width:180px;height:1px;background:#e6e6e6;"></div><span class="t" style="left:212px;top:178px;height:14px;line-height:14px;font-size:11px;font-weight:bold;transform:scaleX(1.1263);">Type</span><div style="left:305px;top:176px;width:180px;height:17px;background:linear-gradient(#3ca6fc,#1a90f4 50%,#0880ee);border:1px solid #f58a2c;"></div><span class="t" style="left:307px;top:178px;height:14px;line-height:14px;font-size:11px;font-weight:bold;color:#ffffff;transform:scaleX(1.0188);">[TABLE]</span><div class="hdr" style="left:210px;top:194px;width:95px;height:18px"></div><div style="left:305px;top:211px;width:180px;height:1px;background:#e6e6e6;"></div><span class="t" style="left:212px;top:196px;height:14px;line-height:14px;font-size:11px;font-weight:bold;transform:scaleX(1.0678);">Name</span><span class="t" style="left:307px;top:196px;height:14px;line-height:14px;font-size:11px;font-weight:bold;transform:scaleX(0.9438);">ABC.ADDRESSEE</span><div class="hdr" style="left:210px;top:212px;width:95px;height:18px"></div><div style="left:305px;top:229px;width:180px;height:1px;background:#e6e6e6;"></div><span class="t" style="left:212px;top:214px;height:14px;line-height:14px;font-size:11px;transform:scaleX(0.9011);">OWNER</span><span class="t" style="left:307px;top:214px;height:14px;line-height:14px;font-size:11px;transform:scaleX(0.8840);">ABC</span><div class="hdr" style="left:210px;top:230px;width:95px;height:18px"></div><div style="left:305px;top:247px;width:180px;height:1px;background:#e6e6e6;"></div><span class="t" style="left:212px;top:232px;height:14px;line-height:14px;font-size:11px;transform:scaleX(0.9323);">PARTITIONED</span><span class="t" style="left:307px;top:232px;height:14px;line-height:14px;font-size:11px;transform:scaleX(0.9091);">NO</span><div class="hdr" style="left:210px;top:248px;width:95px;height:18px"></div><div style="left:305px;top:265px;width:180px;height:1px;background:#e6e6e6;"></div><span class="t" style="left:212px;top:250px;height:14px;line-height:14px;font-size:11px;transform:scaleX(0.8393);">DEGREE</span><span class="t" style="left:307px;top:250px;height:14px;line-height:14px;font-size:11px;transform:scaleX(0.9796);">1</span><div class="hdr" style="left:210px;top:266px;width:95px;height:18px"></div><div style="left:305px;top:283px;width:180px;height:1px;background:#e6e6e6;"></div><span class="t" style="left:212px;top:268px;height:14px;line-height:14px;font-size:11px;transform:scaleX(0.9012);">INSTANCES</span><span class="t" style="left:307px;top:268px;height:14px;line-height:14px;font-size:11px;transform:scaleX(0.9796);">1</span><div class="hdr" style="left:210px;top:284px;width:95px;height:18px"></div><div style="left:305px;top:301px;width:180px;height:1px;background:#e6e6e6;"></div><span class="t" style="left:212px;top:286px;height:14px;line-height:14px;font-size:11px;transform:scaleX(0.8779);">TEMPORARY</span><span class="t" style="left:307px;top:286px;height:14px;line-height:14px;font-size:11px;transform:scaleX(0.9091);">NO</span><div class="hdr" style="left:210px;top:302px;width:95px;height:18px"></div><div style="left:305px;top:319px;width:180px;height:1px;background:#e6e6e6;"></div><span class="t" style="left:212px;top:304px;height:14px;line-height:14px;font-size:11px;transform:scaleX(0.8792);">TABLESPACE</span><span class="t" style="left:307px;top:304px;height:14px;line-height:14px;font-size:11px;transform:scaleX(0.8442);">USERS</span><div class="hdr" style="left:210px;top:320px;width:95px;height:18px"></div><div style="left:305px;top:337px;width:180px;height:1px;background:#e6e6e6;"></div><span class="t" style="left:212px;top:322px;height:14px;line-height:14px;font-size:11px;transform:scaleX(0.8561);">PCTUSED</span><span class="t" style="left:307px;top:322px;height:14px;line-height:14px;font-size:11px;transform:scaleX(0.9796);">0</span><div class="hdr" style="left:210px;top:338px;width:95px;height:18px"></div><div style="left:305px;top:355px;width:180px;height:1px;background:#e6e6e6;"></div><span class="t" style="left:212px;top:340px;height:14px;line-height:14px;font-size:11px;transform:scaleX(0.8570);">PCTFREE</span><span class="t" style="left:307px;top:340px;height:14px;line-height:14px;font-size:11px;transform:scaleX(0.9796);">10</span><div class="hdr" style="left:210px;top:356px;width:95px;height:18px"></div><div style="left:305px;top:373px;width:180px;height:1px;background:#e6e6e6;"></div><span class="t" style="left:212px;top:358px;height:14px;line-height:14px;font-size:11px;transform:scaleX(0.9349);">INITRANS</span><span class="t" style="left:307px;top:358px;height:14px;line-height:14px;font-size:11px;transform:scaleX(0.9796);">1</span><div class="hdr" style="left:210px;top:374px;width:95px;height:18px"></div><div style="left:305px;top:391px;width:180px;height:1px;background:#e6e6e6;"></div><span class="t" style="left:212px;top:376px;height:14px;line-height:14px;font-size:11px;transform:scaleX(0.8834);">MAXTRANS</span><span class="t" style="left:307px;top:376px;height:14px;line-height:14px;font-size:11px;transform:scaleX(0.9804);">255</span><div class="hdr" style="left:210px;top:392px;width:95px;height:18px"></div><div style="left:305px;top:409px;width:180px;height:1px;background:#e6e6e6;"></div><span class="t" style="left:212px;top:394px;height:14px;line-height:14px;font-size:11px;transform:scaleX(0.9217);">INITIAL_EXTENT</span><span class="t" style="left:307px;top:394px;height:14px;line-height:14px;font-size:11px;transform:scaleX(0.9194);">64K</span><div class="hdr" style="left:210px;top:410px;width:95px;height:18px"></div><div style="left:305px;top:427px;width:180px;height:1px;background:#e6e6e6;"></div><span class="t" style="left:212px;top:412px;height:14px;line-height:14px;font-size:11px;transform:scaleX(0.8829);">MIN_EXTENTS</span><span class="t" style="left:307px;top:412px;height:14px;line-height:14px;font-size:11px;transform:scaleX(0.9796);">1</span><div class="hdr" style="left:210px;top:428px;width:95px;height:18px"></div><div style="left:305px;top:445px;width:180px;height:1px;background:#e6e6e6;"></div><span class="t" style="left:212px;top:430px;height:14px;line-height:14px;font-size:11px;transform:scaleX(0.8675);">MAX_EXTENTS</span><span class="t" style="left:307px;top:430px;height:14px;line-height:14px;font-size:11px;transform:scaleX(0.9312);">unlimited</span><div class="hdr" style="left:210px;top:446px;width:95px;height:18px"></div><div style="left:305px;top:463px;width:180px;height:1px;background:#e6e6e6;"></div><span class="t" style="left:212px;top:448px;height:14px;line-height:14px;font-size:11px;transform:scaleX(0.8891);">PCT_INCREASE</span><span class="t" style="left:307px;top:448px;height:14px;line-height:14px;font-size:11px;transform:scaleX(0.9796);">0</span><div class="hdr" style="left:210px;top:464px;width:95px;height:18px"></div><div style="left:305px;top:481px;width:180px;height:1px;background:#e6e6e6;"></div><span class="t" style="left:212px;top:466px;height:14px;line-height:14px;font-size:11px;transform:scaleX(0.8799);">BUFFER_POOL</span><span class="t" style="left:307px;top:466px;height:14px;line-height:14px;font-size:11px;transform:scaleX(0.9034);">DEFAULT</span><div class="hdr" style="left:210px;top:482px;width:95px;height:18px"></div><div style="left:305px;top:499px;width:180px;height:1px;background:#e6e6e6;"></div><span class="t" style="left:212px;top:484px;height:14px;line-height:14px;font-size:11px;transform:scaleX(0.8764);">LOGGING</span><span class="t" style="left:307px;top:484px;height:14px;line-height:14px;font-size:11px;transform:scaleX(0.8176);">YES</span><div class="hdr" style="left:210px;top:500px;width:95px;height:18px"></div><div style="left:305px;top:517px;width:180px;height:1px;background:#e6e6e6;"></div><span class="t" style="left:212px;top:502px;height:14px;line-height:14px;font-size:11px;transform:scaleX(0.8847);">COMPRESSION</span><span class="t" style="left:307px;top:502px;height:14px;line-height:14px;font-size:11px;transform:scaleX(0.8820);">DISABLED</span><div class="hdr" style="left:210px;top:518px;width:95px;height:18px"></div><div style="left:305px;top:535px;width:180px;height:1px;background:#e6e6e6;"></div><span class="t" style="left:212px;top:520px;height:14px;line-height:14px;font-size:11px;transform:scaleX(0.8828);">CACHE</span><span class="t" style="left:307px;top:520px;height:14px;line-height:14px;font-size:11px;transform:scaleX(0.8802);">N</span><div class="hdr" style="left:210px;top:536px;width:95px;height:18px"></div><div style="left:305px;top:553px;width:180px;height:1px;background:#e6e6e6;"></div><span class="t" style="left:212px;top:538px;height:14px;line-height:14px;font-size:11px;transform:scaleX(0.9257);">MONITORING</span><span class="t" style="left:307px;top:538px;height:14px;line-height:14px;font-size:11px;transform:scaleX(0.8176);">YES</span><div style="left:210px;top:176px;width:2px;height:17px;background:#f5b450;"></div><div style="left:0px;top:581px;width:800px;height:19px;background:#f0f0f0;"></div><div style="left:195px;top:580px;width:605px;height:1px;background:#e2e2e2;"></div><div style="left:199px;top:583px;width:1px;height:16px;background:#d7d7d7;"></div><div style="left:298px;top:583px;width:1px;height:16px;background:#d7d7d7;"></div><div style="left:517px;top:583px;width:1px;height:16px;background:#d7d7d7;"></div><div style="left:547px;top:583px;width:1px;height:16px;background:#d7d7d7;"></div><div style="left:567px;top:583px;width:1px;height:16px;background:#d7d7d7;"></div><span class="t" style="left:204px;top:583px;height:16px;line-height:16px;font-size:12px;font-weight:bold;transform:scaleX(0.9731);">21</span><span class="t" style="left:572px;top:583px;height:16px;line-height:16px;font-size:12px;transform:scaleX(0.8754);">[TABLE] ABC.ADDRESSEE</span><div style="left:795px;top:589px;width:2px;height:2px;background:#bfbfbf;"></div><div style="left:792px;top:592px;width:2px;height:2px;background:#bfbfbf;"></div><div style="left:795px;top:592px;width:2px;height:2px;background:#bfbfbf;"></div><div style="left:789px;top:595px;width:2px;height:2px;background:#bfbfbf;"></div><div style="left:792px;top:595px;width:2px;height:2px;background:#bfbfbf;"></div><div style="left:795px;top:595px;width:2px;height:2px;background:#bfbfbf;"></div></div></body></html>
